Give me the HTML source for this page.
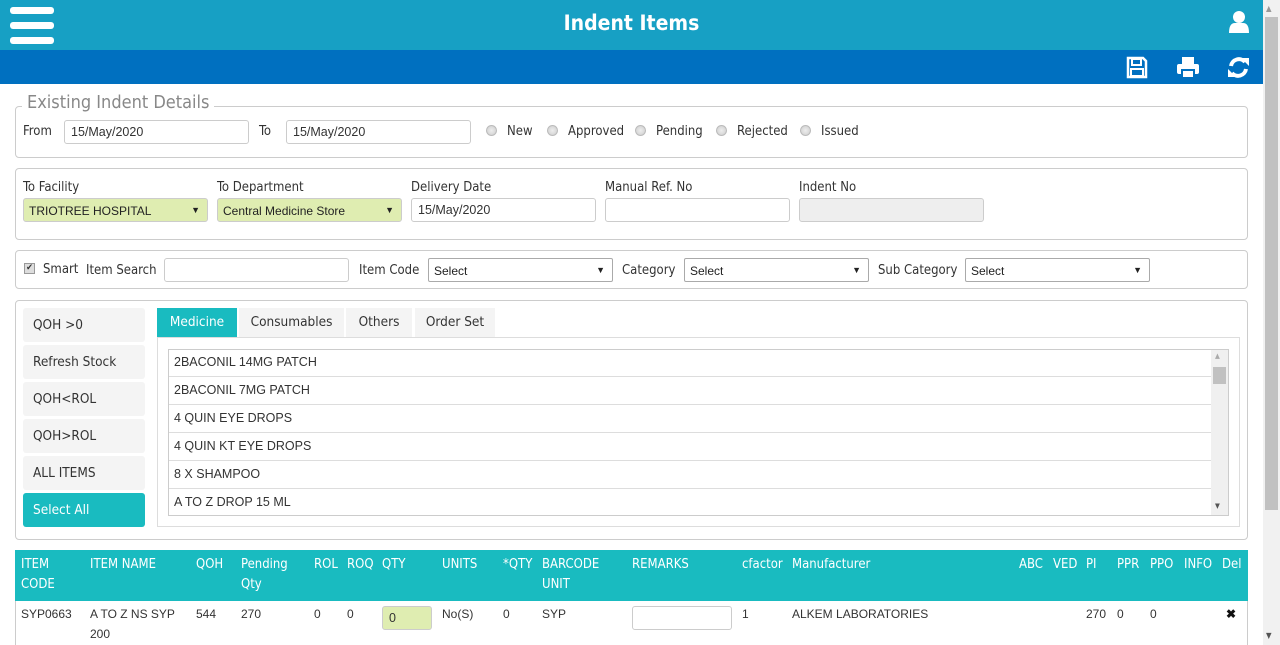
<!DOCTYPE html>
<html><head><meta charset="utf-8"><style>
*{box-sizing:border-box;margin:0;padding:0}
body{width:1280px;height:645px;overflow:hidden;background:#fff;position:relative;font-family:"Liberation Sans Narrow","DejaVu Sans Condensed","Liberation Sans",sans-serif;font-size:13px;color:#333}
.a{position:absolute}
.box{position:absolute;border:1px solid #ccc;border-radius:4px}
.inp{position:absolute;border:1px solid #ccc;border-radius:3px;background:#fff;height:24px;padding:4px 6px;font-family:"Liberation Sans",sans-serif;font-size:12.5px;color:#333}
.sel{position:absolute;border:1px solid #aaa;border-radius:2px;background:#fff;height:24px;padding:5px 5px;font-family:"Liberation Sans",sans-serif;font-size:12px;color:#222}
.sel:after{content:"▼";position:absolute;right:7px;top:6px;font-size:9px}
.radio{position:absolute;width:11px;height:11px;border-radius:50%;border:1px solid #bbb;background:radial-gradient(#eee,#ccc)}
.lb{position:absolute;width:122px;height:34px;border-radius:3px;background:#f4f4f4;padding:9px 10px;font-size:13.5px;color:#333}
.tab{position:absolute;top:308px;height:29px;background:#f4f4f4;padding:6px 0;text-align:center;font-size:13.5px;color:#333}
.row{position:absolute;left:169px;width:1042px;height:28px;border-bottom:1px solid #ddd;padding:6px 5px;font-family:"Liberation Sans",sans-serif;font-size:12.5px;color:#333}
.th{position:absolute;color:#fff;font-size:13px;line-height:20px;top:555px}
.td{position:absolute;top:604px;font-family:"Liberation Sans",sans-serif;font-size:12px;line-height:20px;color:#333}
</style></head><body>
<div class="a" style="left:0;top:0;width:1263px;height:50px;background:#17a0c4"></div>
<div class="a" style="left:10px;top:7px;width:44px;height:7px;background:#fff;border-radius:3px"></div>
<div class="a" style="left:10px;top:22px;width:44px;height:7px;background:#fff;border-radius:3px"></div>
<div class="a" style="left:10px;top:37px;width:44px;height:7px;background:#fff;border-radius:3px"></div>
<div class="a" style="left:0;top:11px;width:1263px;text-align:center;color:#fff;font-size:21px;font-weight:bold">Indent Items</div>
<svg class="a" style="left:1228px;top:10px" width="22" height="24" viewBox="0 0 22 24"><circle cx="11" cy="7" r="6" fill="#fff"/><path d="M1 23 Q1 13 7 13 L15 13 Q21 13 21 23 Z" fill="#fff"/></svg>
<div class="a" style="left:0;top:50px;width:1263px;height:34px;background:#0070c0"></div>
<svg class="a" style="left:1126px;top:56px" width="22" height="23" viewBox="0 0 22 23"><path d="M2 2h15l3 3v16H2z" fill="none" stroke="#fff" stroke-width="2.5"/><rect x="6" y="3" width="9" height="6" fill="none" stroke="#fff" stroke-width="2"/><rect x="5" y="13" width="12" height="7" fill="none" stroke="#fff" stroke-width="2"/></svg>
<svg class="a" style="left:1176px;top:56px" width="24" height="23" viewBox="0 0 24 23"><rect x="6" y="1" width="12" height="8" fill="#fff"/><rect x="1" y="8" width="22" height="10" rx="2" fill="#fff"/><rect x="6" y="14" width="12" height="8" fill="#fff" stroke="#0070c0" stroke-width="2"/></svg>
<svg class="a" style="left:1227px;top:56px" width="23" height="23" viewBox="0 0 23 23"><path d="M4 10 A8 8 0 0 1 18 6" fill="none" stroke="#fff" stroke-width="4"/><path d="M14 2 L22 2 L22 10 Z" fill="#fff"/><path d="M19 13 A8 8 0 0 1 5 17" fill="none" stroke="#fff" stroke-width="4"/><path d="M9 21 L1 21 L1 13 Z" fill="#fff"/></svg>
<div class="a" style="left:1263px;top:0;width:17px;height:645px;background:#f1f1f1"></div>
<div class="a" style="left:1265px;top:17px;width:13px;height:493px;background:#c1c1c1"></div>
<div class="a" style="left:1266px;top:4px;font-size:8px;color:#999">▲</div>
<div class="a" style="left:1266px;top:631px;font-size:8px;color:#555">▼</div>

<div class="box" style="left:15px;top:106px;width:1233px;height:52px"></div>
<div class="a" style="left:22px;top:92px;background:#fff;padding:0 5px;font-size:18px;color:#888">Existing Indent Details</div>
<div class="a" style="left:23px;top:124px">From</div>
<div class="inp" style="left:64px;top:120px;width:185px">15/May/2020</div>
<div class="a" style="left:259px;top:124px">To</div>
<div class="inp" style="left:286px;top:120px;width:185px">15/May/2020</div>
<div class="radio" style="left:486px;top:125px"></div><div class="a" style="left:507px;top:124px">New</div>
<div class="radio" style="left:547px;top:125px"></div><div class="a" style="left:568px;top:124px">Approved</div>
<div class="radio" style="left:635px;top:125px"></div><div class="a" style="left:656px;top:124px">Pending</div>
<div class="radio" style="left:716px;top:125px"></div><div class="a" style="left:737px;top:124px">Rejected</div>
<div class="radio" style="left:800px;top:125px"></div><div class="a" style="left:821px;top:124px">Issued</div>

<div class="box" style="left:15px;top:168px;width:1233px;height:72px"></div>
<div class="a" style="left:23px;top:180px">To Facility</div>
<div class="a" style="left:217px;top:180px">To Department</div>
<div class="a" style="left:411px;top:180px">Delivery Date</div>
<div class="a" style="left:605px;top:180px">Manual Ref. No</div>
<div class="a" style="left:799px;top:180px">Indent No</div>
<div class="sel" style="left:23px;top:198px;width:185px;background:#dfedb1;border-color:#ccc;border-radius:3px">TRIOTREE HOSPITAL</div>
<div class="sel" style="left:217px;top:198px;width:185px;background:#dfedb1;border-color:#ccc;border-radius:3px">Central Medicine Store</div>
<div class="inp" style="left:411px;top:198px;width:185px">15/May/2020</div>
<div class="inp" style="left:605px;top:198px;width:185px"></div>
<div class="inp" style="left:799px;top:198px;width:185px;background:#eee"></div>

<div class="box" style="left:15px;top:250px;width:1233px;height:39px"></div>
<div class="a" style="left:24px;top:263px;width:11px;height:11px;border:1px solid #999;background:#ddd;font-size:9px;line-height:9px;text-align:center">✔</div>
<div class="a" style="left:43px;top:262px">Smart</div>
<div class="a" style="left:86px;top:263px">Item Search</div>
<div class="inp" style="left:164px;top:258px;width:185px"></div>
<div class="a" style="left:359px;top:263px">Item Code</div>
<div class="sel" style="left:428px;top:258px;width:185px">Select</div>
<div class="a" style="left:622px;top:263px">Category</div>
<div class="sel" style="left:684px;top:258px;width:185px">Select</div>
<div class="a" style="left:878px;top:263px">Sub Category</div>
<div class="sel" style="left:965px;top:258px;width:185px">Select</div>

<div class="box" style="left:15px;top:300px;width:1233px;height:240px"></div>
<div class="lb" style="left:23px;top:308px">QOH &gt;0</div>
<div class="lb" style="left:23px;top:345px">Refresh Stock</div>
<div class="lb" style="left:23px;top:382px">QOH&lt;ROL</div>
<div class="lb" style="left:23px;top:419px">QOH&gt;ROL</div>
<div class="lb" style="left:23px;top:456px">ALL ITEMS</div>
<div class="lb" style="left:23px;top:493px;background:#19bbc0;color:#fff">Select All</div>
<div class="tab" style="left:157px;width:80px;background:#19bbc0;color:#fff">Medicine</div>
<div class="tab" style="left:239px;width:105px">Consumables</div>
<div class="tab" style="left:346px;width:66px">Others</div>
<div class="tab" style="left:415px;width:80px">Order Set</div>
<div class="a" style="left:157px;top:337px;width:1083px;height:190px;border:1px solid #ddd"></div>
<div class="a" style="left:168px;top:349px;width:1061px;height:167px;border:1px solid #ccc"></div>
<div class="row" style="top:349px">2BACONIL 14MG PATCH</div>
<div class="row" style="top:377px">2BACONIL 7MG PATCH</div>
<div class="row" style="top:405px">4 QUIN EYE DROPS</div>
<div class="row" style="top:433px">4 QUIN KT EYE DROPS</div>
<div class="row" style="top:461px">8 X SHAMPOO</div>
<div class="row" style="top:489px;border-bottom:none">A TO Z DROP 15 ML</div>
<div class="a" style="left:1211px;top:350px;width:17px;height:165px;background:#f0f0f0"></div>
<div class="a" style="left:1213px;top:367px;width:13px;height:17px;background:#c1c1c1"></div>
<div class="a" style="left:1215px;top:352px;font-size:7px;color:#aaa">▲</div>
<div class="a" style="left:1215px;top:502px;font-size:7px;color:#555">▼</div>

<div class="a" style="left:15px;top:550px;width:1233px;height:95px;border:1px solid #ccc;border-bottom:none"></div>
<div class="a" style="left:15px;top:550px;width:1233px;height:51px;background:#19bbc0"></div>
<div class="th" style="left:21px">ITEM<br>CODE</div>
<div class="th" style="left:90px">ITEM NAME</div>
<div class="th" style="left:196px">QOH</div>
<div class="th" style="left:241px">Pending<br>Qty</div>
<div class="th" style="left:314px">ROL</div>
<div class="th" style="left:347px">ROQ</div>
<div class="th" style="left:382px">QTY</div>
<div class="th" style="left:442px">UNITS</div>
<div class="th" style="left:503px">*QTY</div>
<div class="th" style="left:542px">BARCODE<br>UNIT</div>
<div class="th" style="left:632px">REMARKS</div>
<div class="th" style="left:742px">cfactor</div>
<div class="th" style="left:792px">Manufacturer</div>
<div class="th" style="left:1019px">ABC</div>
<div class="th" style="left:1053px">VED</div>
<div class="th" style="left:1086px">PI</div>
<div class="th" style="left:1117px">PPR</div>
<div class="th" style="left:1150px">PPO</div>
<div class="th" style="left:1184px">INFO</div>
<div class="th" style="left:1222px">Del</div>
<div class="td" style="left:21px">SYP0663</div>
<div class="td" style="left:90px">A TO Z NS SYP<br>200</div>
<div class="td" style="left:196px">544</div>
<div class="td" style="left:241px">270</div>
<div class="td" style="left:314px">0</div>
<div class="td" style="left:347px">0</div>
<div class="inp" style="left:382px;top:606px;width:50px;background:#dfedb1">0</div>
<div class="td" style="left:442px">No(S)</div>
<div class="td" style="left:503px">0</div>
<div class="td" style="left:542px">SYP</div>
<div class="inp" style="left:632px;top:606px;width:100px"></div>
<div class="td" style="left:742px">1</div>
<div class="td" style="left:792px">ALKEM LABORATORIES</div>
<div class="td" style="left:1086px">270</div>
<div class="td" style="left:1117px">0</div>
<div class="td" style="left:1150px">0</div>
<div class="td" style="left:1226px;font-weight:bold;color:#111">✖</div>
</body></html>
